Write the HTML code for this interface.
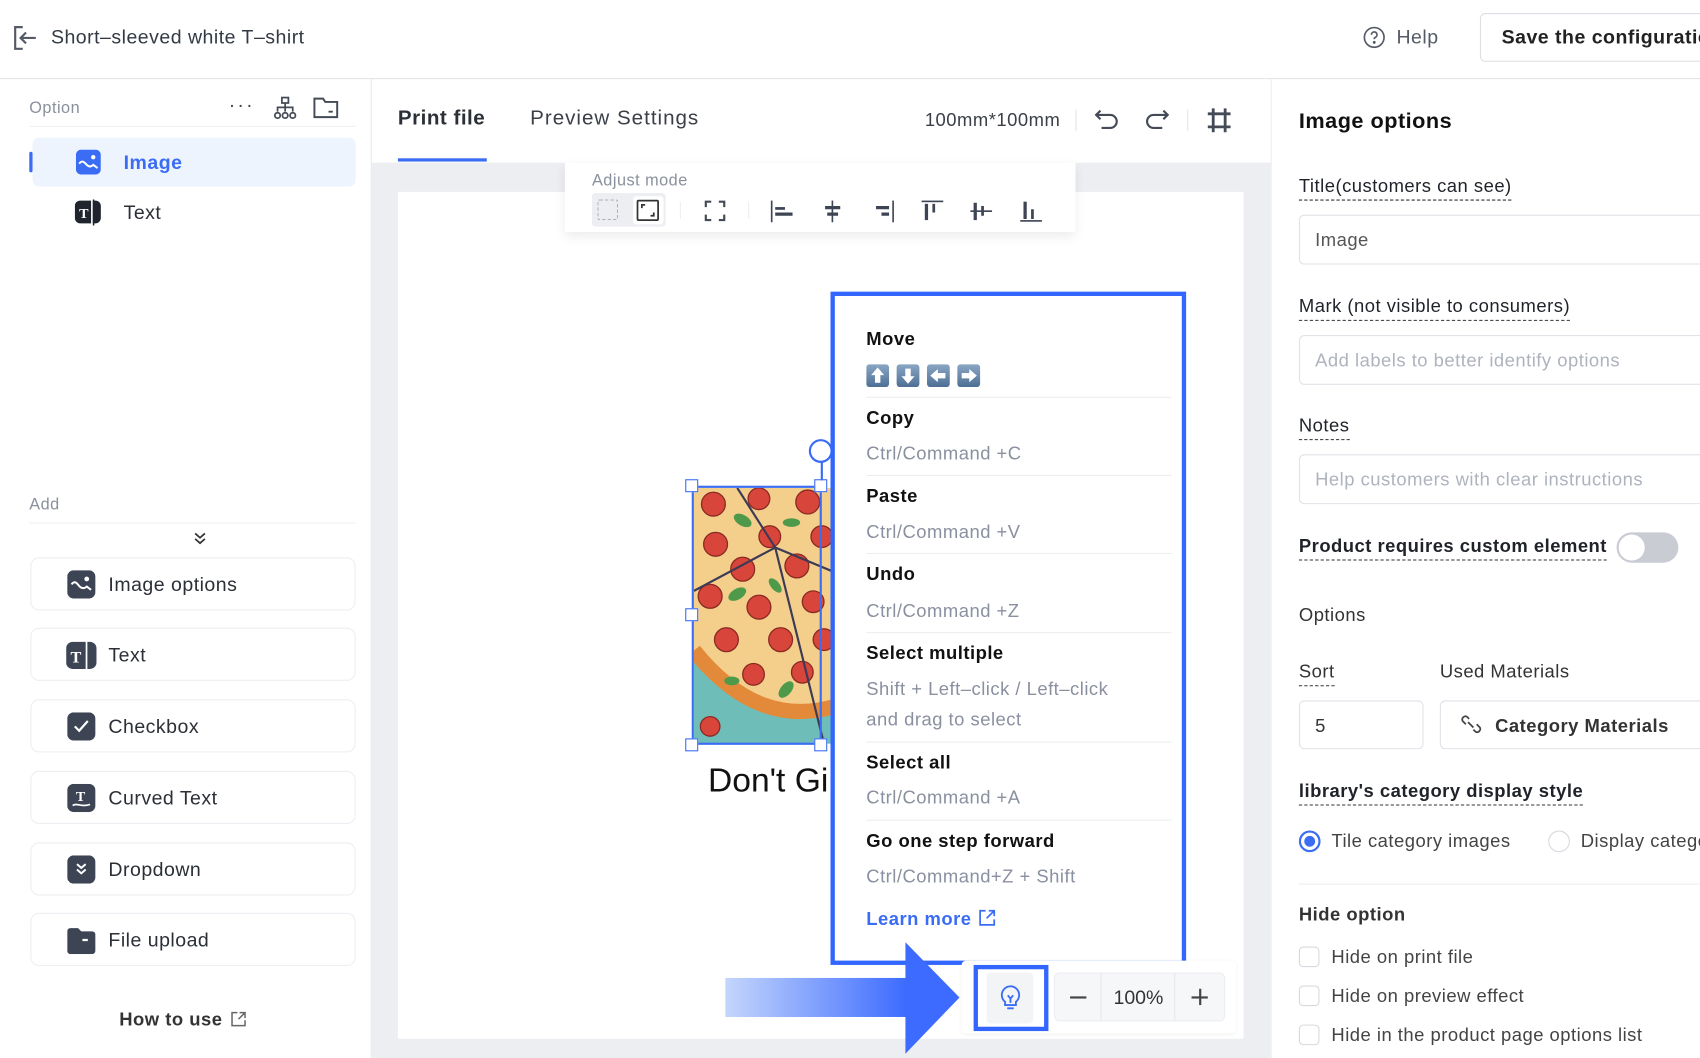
<!DOCTYPE html>
<html><head><meta charset="utf-8"><style>
*{box-sizing:border-box;margin:0;padding:0}
html,body{width:1700px;height:1058px;overflow:hidden;background:#fff;font-family:"Liberation Sans",sans-serif}
#w{position:absolute;left:0;top:0;width:1568px;height:976px;transform:scale(1.0842);transform-origin:0 0;overflow:hidden;background:#fff;letter-spacing:0.45px}
.a{position:absolute}
.t{position:absolute;line-height:20px;white-space:nowrap;color:#1f2329}
.dash{border-bottom:1px dashed #333;padding-bottom:2px}
.card{position:absolute;left:28px;width:300px;height:49px;border:1px solid #eceef1;border-radius:8px;background:#fff}
.card .l{position:absolute;left:71px;top:14px;font-size:18px;color:#2b2f36;line-height:20px}
.inp{position:absolute;left:1198px;width:400px;height:46px;border:1px solid #dfe2e7;border-radius:5px;font-size:17px;color:#aeb3bd;padding:13px 14px;line-height:20px;white-space:nowrap}
.mi{position:absolute;left:799px;font-size:17px;line-height:20px;white-space:nowrap}
.mh{color:#111;font-weight:600}
.ms{color:#8a90a0}
.sep{position:absolute;left:799px;width:282px;height:1px;background:#eceef1}
.cb{position:absolute;left:1198px;width:19px;height:19px;border:1.5px solid #d6d9df;border-radius:4px}
</style></head><body><div id="w">

<!-- header -->
<svg class="a" style="left:12px;top:23px" width="24" height="24" viewBox="0 0 24 24" fill="none" stroke="#555b66" stroke-width="2"><path d="M9 2H2v20h7"/><path d="M21 12H8M12 7l-5 5 5 5"/></svg>
<div class="t" style="left:47px;top:24px;font-size:18px;color:#333a44">Short–sleeved white T–shirt</div>
<svg class="a" style="left:1257px;top:24px" width="21" height="21" viewBox="0 0 22 22" fill="none" stroke="#555b66" stroke-width="1.6"><circle cx="11" cy="11" r="9.5"/><path d="M8.3 8.5a2.7 2.7 0 1 1 3.8 2.4c-.8.4-1.1.9-1.1 1.8"/><circle cx="11" cy="15.8" r=".6" fill="#555b66"/></svg>
<div class="t" style="left:1288px;top:24px;font-size:18px;color:#555b66">Help</div>
<div class="a" style="left:1365px;top:12px;width:260px;height:45px;border:1px solid #dcdfe4;border-radius:5px"></div>
<div class="t" style="left:1385px;top:24px;font-size:18px;font-weight:600;color:#222">Save the configuration</div>
<div class="a" style="left:0;top:72px;width:1568px;height:1px;background:#e3e5e9"></div>

<!-- left sidebar -->
<div class="t" style="left:27px;top:90px;font-size:15px;color:#8a909c">Option</div>
<div class="t" style="left:211px;top:87px;font-size:18px;color:#444;letter-spacing:2px">···</div>
<svg class="a" style="left:251px;top:88px" width="24" height="24" viewBox="0 0 24 24" fill="none" stroke="#444b57" stroke-width="1.6"><rect x="9" y="2" width="6" height="5"/><path d="M12 7v4M5 15v-4h14v4M12 11v4"/><circle cx="5" cy="18.5" r="2.5"/><circle cx="12" cy="18.5" r="2.5"/><circle cx="19" cy="18.5" r="2.5"/></svg>
<svg class="a" style="left:288px;top:88px" width="25" height="22" viewBox="0 0 25 22" fill="none" stroke="#444b57" stroke-width="1.8"><path d="M2 3h8l2 3h11v14H2z"/><path d="M15 15h4"/></svg>
<div class="a" style="left:27px;top:116px;width:301px;height:1px;background:#eef0f3"></div>
<div class="a" style="left:30px;top:127px;width:298px;height:45px;background:#eef4fe;border-radius:6px"></div>
<div class="a" style="left:27px;top:140px;width:3px;height:19px;background:#3a6cf4;border-radius:2px"></div>
<svg class="a" style="left:70px;top:138px" width="23" height="23" viewBox="0 0 23 23"><rect width="23" height="23" rx="5" fill="#3a6cf4"/><path d="M3 13c3-4 5-1 7 1s4 2 6 0l4 3" stroke="#fff" stroke-width="1.8" fill="none"/><circle cx="16" cy="7" r="2" fill="#fff"/></svg>
<div class="t" style="left:114px;top:140px;font-size:18px;color:#3a6cf4;font-weight:600">Image</div>
<svg class="a" style="left:69px;top:184px" width="25" height="24" viewBox="0 0 25 24"><rect x="0" y="1" width="24" height="21" rx="5" fill="#20242c"/><rect x="15" y="0" width="1.6" height="24" fill="#fff"/><rect x="16.6" y="0" width="1.4" height="24" fill="#20242c"/><text x="4" y="17" font-size="13" font-weight="bold" fill="#fff" font-family="Liberation Serif">T</text></svg>
<div class="t" style="left:114px;top:186px;font-size:18px;color:#2b2f36">Text</div>

<div class="t" style="left:27px;top:456px;font-size:15px;color:#8a909c">Add</div>
<div class="a" style="left:27px;top:482px;width:301px;height:1px;background:#eef0f3"></div>
<svg class="a" style="left:178px;top:490px" width="13" height="14" viewBox="0 0 13 14" fill="none" stroke="#333" stroke-width="1.6"><path d="M2 2l4.5 4 4.5-4M2 7l4.5 4 4.5-4"/></svg>

<div class="card" style="top:514px"><svg class="a" style="left:33px;top:11px" width="26" height="26" viewBox="0 0 26 26"><rect width="26" height="26" rx="6" fill="#3d4454"/><path d="M4 13c3-4 5-1 7 1.5s5 2.5 7 0.5l4 3" stroke="#fff" stroke-width="1.8" fill="none"/><circle cx="18" cy="8" r="2.2" fill="#fff"/></svg><div class="l">Image options</div></div>
<div class="card" style="top:579px"><svg class="a" style="left:32px;top:10px" width="28" height="29" viewBox="0 0 28 29"><rect x="0" y="2" width="28" height="25" rx="6" fill="#3d4454"/><rect x="18" y="0" width="1.6" height="29" fill="#fff"/><text x="4" y="21" font-size="15" font-weight="bold" fill="#fff" font-family="Liberation Serif">T</text></svg><div class="l">Text</div></div>
<div class="card" style="top:645px"><svg class="a" style="left:33px;top:11px" width="26" height="26" viewBox="0 0 26 26"><rect width="26" height="26" rx="6" fill="#3d4454"/><path d="M7 13l4 4 8-9" stroke="#fff" stroke-width="2" fill="none"/></svg><div class="l">Checkbox</div></div>
<div class="card" style="top:711px"><svg class="a" style="left:33px;top:11px" width="26" height="26" viewBox="0 0 26 26"><rect width="26" height="26" rx="6" fill="#3d4454"/><text x="8" y="16" font-size="13" font-weight="bold" fill="#fff" font-family="Liberation Serif">T</text><path d="M5 20c4-3 8 2 16-1" stroke="#fff" stroke-width="1.6" fill="none"/></svg><div class="l">Curved Text</div></div>
<div class="card" style="top:777px"><svg class="a" style="left:33px;top:11px" width="26" height="26" viewBox="0 0 26 26"><rect width="26" height="26" rx="6" fill="#3d4454"/><path d="M9 8l4 3.5 4-3.5M9 13l4 3.5 4-3.5" stroke="#fff" stroke-width="1.8" fill="none"/></svg><div class="l">Dropdown</div></div>
<div class="card" style="top:842px"><svg class="a" style="left:33px;top:11px" width="26" height="26" viewBox="0 0 26 26"><path d="M0 5a3 3 0 0 1 3-3h7l3 3h10a3 3 0 0 1 3 3v15a3 3 0 0 1-3 3H3a3 3 0 0 1-3-3z" fill="#3d4454"/><path d="M14 13h5" stroke="#fff" stroke-width="2"/></svg><div class="l">File upload</div></div>
<div class="t" style="left:110px;top:931px;font-size:17px;color:#333;font-weight:600">How to use</div>
<svg class="a" style="left:212px;top:932px" width="16" height="16" viewBox="0 0 16 16" fill="none" stroke="#666" stroke-width="1.4"><path d="M7 2H2v12h12V9M9 2h5v5M14 2L8 8"/></svg>

<!-- center -->
<div class="a" style="left:342px;top:73px;width:1px;height:903px;background:#e7e9ed"></div>
<div class="t" style="left:367px;top:100px;font-size:19px;color:#2b2f36;font-weight:600">Print file</div>
<div class="a" style="left:367px;top:146px;width:82px;height:3px;background:#3a6cf4"></div>
<div class="t" style="left:489px;top:100px;font-size:19px;color:#3a3f48;letter-spacing:0.9px">Preview Settings</div>
<div class="t" style="left:853px;top:101px;font-size:17px;color:#3a3f48">100mm*100mm</div>
<div class="a" style="left:992px;top:101px;width:1px;height:20px;background:#e3e5e9"></div>
<svg class="a" style="left:1008px;top:99px" width="26" height="24" viewBox="0 0 26 24" fill="none" stroke="#444b57" stroke-width="2"><path d="M7 3L3 7l4 4"/><path d="M3 7h13a6 6 0 0 1 0 12H8"/></svg>
<svg class="a" style="left:1054px;top:99px" width="26" height="24" viewBox="0 0 26 24" fill="none" stroke="#444b57" stroke-width="2"><path d="M19 3l4 4-4 4"/><path d="M23 7H10a6 6 0 0 0 0 12h8"/></svg>
<div class="a" style="left:1095px;top:101px;width:1px;height:20px;background:#e3e5e9"></div>
<svg class="a" style="left:1113px;top:99px" width="23" height="24" viewBox="0 0 23 24" fill="none" stroke="#444b57" stroke-width="2.6"><path d="M6 1v22M17 1v22M1 6h21M1 18h21"/></svg>

<div class="a" style="left:343px;top:150px;width:829px;height:826px;background:#eceef2"></div>
<div class="a" style="left:367px;top:177px;width:780px;height:781px;background:#fff"></div>

<!-- adjust popup -->
<div class="a" style="left:521px;top:150px;width:471px;height:64px;background:#fff;box-shadow:0 4px 10px rgba(0,0,0,.08)"></div>
<div class="t" style="left:546px;top:157px;font-size:15px;color:#8a909c">Adjust mode</div>
<div class="a" style="left:546px;top:178px;width:68px;height:31px;background:#eceef2;border-radius:3px"></div>
<div class="a" style="left:551px;top:184px;width:19px;height:19px;border:1.5px dashed #aab0ba;border-radius:2px"></div>
<div class="a" style="left:584px;top:181px;width:28px;height:26px;background:#fff;border-radius:3px"></div>
<svg class="a" style="left:587px;top:184px" width="21" height="20" viewBox="0 0 21 20" fill="none" stroke="#333" stroke-width="1.6"><rect x="1" y="1" width="19" height="18" rx="1"/><path d="M5 8V5h3M16 12v3h-3"/></svg>
<svg class="a" style="left:649px;top:184px" width="21" height="21" viewBox="0 0 21 21" fill="none" stroke="#444b57" stroke-width="2"><path d="M2 7V2h5M14 2h5v5M19 14v5h-5M7 19H2v-5"/></svg>
<div class="a" style="left:627px;top:186px;width:1px;height:16px;background:#eceef1"></div>
<div class="a" style="left:690px;top:186px;width:1px;height:16px;background:#eceef1"></div>
<svg class="a" style="left:710px;top:183px" width="255" height="24" viewBox="0 0 255 24" fill="#3d4454"><rect x="1" y="2" width="1.5" height="20"/><rect x="5" y="8" width="9" height="2.5"/><rect x="5" y="13" width="16" height="3"/>
<rect x="57" y="2" width="1.5" height="20"/><rect x="51" y="7" width="14" height="3"/><rect x="53" y="13" width="10" height="3"/>
<rect x="113" y="2" width="1.5" height="20"/><rect x="98" y="7" width="12" height="3"/><rect x="103" y="13" width="7" height="3"/>
<rect x="140" y="2" width="20" height="1.5"/><rect x="143" y="5" width="3" height="15"/><rect x="150" y="5" width="2.5" height="8"/>
<rect x="185" y="11" width="20" height="1.5"/><rect x="188" y="4" width="3" height="16"/><rect x="195" y="7" width="2.5" height="9"/>
<rect x="231" y="20" width="20" height="1.5"/><rect x="234" y="3" width="3" height="16"/><rect x="241" y="10" width="2.5" height="9"/></svg>

<!-- pizza -->
<svg class="a" style="left:640px;top:450px" width="135" height="236" viewBox="0 0 135 236">
<rect width="135" height="236" fill="#f4cf8c"/>
<path d="M0 150 Q60 225 135 200 L135 236 L0 236z" fill="#6fbdb8"/>
<path d="M0 150 Q60 225 135 200" stroke="#e38a3a" stroke-width="14" fill="none"/>
<g fill="#d8453a" stroke="#8a2a22" stroke-width="1.2">
<circle cx="18" cy="15" r="11"/><circle cx="60" cy="10" r="10"/><circle cx="105" cy="13" r="11"/><circle cx="20" cy="52" r="11"/><circle cx="70" cy="45" r="10"/><circle cx="118" cy="45" r="10"/><circle cx="45" cy="75" r="11"/><circle cx="95" cy="72" r="11"/><circle cx="15" cy="100" r="11"/><circle cx="60" cy="110" r="11"/><circle cx="110" cy="105" r="10"/><circle cx="30" cy="140" r="11"/><circle cx="80" cy="140" r="11"/><circle cx="120" cy="140" r="10"/><circle cx="55" cy="172" r="10"/><circle cx="100" cy="170" r="10"/><circle cx="15" cy="220" r="9"/></g>
<g fill="#4f9a4a"><ellipse cx="45" cy="30" rx="9" ry="5" transform="rotate(30 45 30)"/><ellipse cx="90" cy="32" rx="8" ry="4"/><ellipse cx="40" cy="98" rx="9" ry="5" transform="rotate(-30 40 98)"/><ellipse cx="75" cy="90" rx="8" ry="4" transform="rotate(50 75 90)"/><ellipse cx="85" cy="186" rx="9" ry="5" transform="rotate(-50 85 186)"/><ellipse cx="35" cy="178" rx="7" ry="4"/></g>
<path d="M40 0 L75 55 L135 80 M75 55 L0 95 M75 55 L120 236" stroke="#3d3a55" stroke-width="2" fill="none"/>
</svg>
<div class="a" style="left:638px;top:448px;width:120px;height:239px;border:2px solid #3a6cf4"></div>
<div class="a" style="left:632px;top:442px;width:12px;height:12px;border:1.5px solid #3a6cf4;background:#fff"></div>
<div class="a" style="left:751px;top:442px;width:12px;height:12px;border:1.5px solid #3a6cf4;background:#fff"></div>
<div class="a" style="left:632px;top:561px;width:12px;height:12px;border:1.5px solid #3a6cf4;background:#fff"></div>
<div class="a" style="left:632px;top:681px;width:12px;height:12px;border:1.5px solid #3a6cf4;background:#fff"></div>
<div class="a" style="left:751px;top:681px;width:12px;height:12px;border:1.5px solid #3a6cf4;background:#fff"></div>
<div class="a" style="left:757px;top:426px;width:1.5px;height:17px;background:#3a6cf4"></div>
<div class="a" style="left:746px;top:405px;width:22px;height:22px;border:2px solid #3a6cf4;border-radius:50%;background:#fff"></div>
<div class="t" style="left:653px;top:703px;font-size:31px;line-height:34px;color:#111;letter-spacing:0">Don't Gi</div>

<!-- menu -->
<div class="a" style="left:766px;top:269px;width:328px;height:621px;border:4px solid #3366ff;background:#fff"></div>
<div class="mi mh" style="top:303px">Move</div>
<svg class="a" style="left:799px;top:336px" width="106" height="21" viewBox="0 0 106 21">
<defs><linearGradient id="k" x1="0" y1="0" x2="0" y2="1"><stop offset="0" stop-color="#8aa6c4"/><stop offset="1" stop-color="#4d6f95"/></linearGradient></defs>
<rect x="0" y="0" width="21" height="21" rx="3" fill="url(#k)"/><rect x="28" y="0" width="21" height="21" rx="3" fill="url(#k)"/><rect x="56" y="0" width="21" height="21" rx="3" fill="url(#k)"/><rect x="84" y="0" width="21" height="21" rx="3" fill="url(#k)"/>
<g fill="#fff"><path d="M10.5 3l6 7h-3.5v7h-5v-7H4.5z"/><path d="M38.5 18l6-7h-3.5V4h-5v7h-3.5z"/><path d="M59 10.5l7-6v3.5h7v5h-7v3.5z"/><path d="M102 10.5l-7-6v3.5h-7v5h7v3.5z"/></g></svg>
<div class="sep" style="top:366px"></div>
<div class="mi mh" style="top:376px">Copy</div>
<div class="mi ms" style="top:409px">Ctrl/Command +C</div>
<div class="sep" style="top:438px"></div>
<div class="mi mh" style="top:448px">Paste</div>
<div class="mi ms" style="top:481px">Ctrl/Command +V</div>
<div class="sep" style="top:510px"></div>
<div class="mi mh" style="top:520px">Undo</div>
<div class="mi ms" style="top:554px">Ctrl/Command +Z</div>
<div class="sep" style="top:583px"></div>
<div class="mi mh" style="top:593px">Select multiple</div>
<div class="mi ms" style="top:626px">Shift + Left–click / Left–click</div>
<div class="mi ms" style="top:654px">and drag to select</div>
<div class="sep" style="top:684px"></div>
<div class="mi mh" style="top:694px">Select all</div>
<div class="mi ms" style="top:726px">Ctrl/Command +A</div>
<div class="sep" style="top:756px"></div>
<div class="mi mh" style="top:766px">Go one step forward</div>
<div class="mi ms" style="top:799px">Ctrl/Command+Z + Shift</div>
<div class="mi" style="top:838px;color:#3a6cf4;font-weight:600">Learn more</div>
<svg class="a" style="left:902px;top:838px" width="17" height="17" viewBox="0 0 17 17" fill="none" stroke="#3a6cf4" stroke-width="1.6"><path d="M7 2H2v13h13v-5M10 2h5v5M15 2L8 9"/></svg>

<!-- bottom controls -->
<div class="a" style="left:887px;top:886px;width:253px;height:67px;background:#fff;border-radius:4px;box-shadow:0 1px 4px rgba(0,0,0,.06)"></div>
<div class="a" style="left:898px;top:890px;width:69px;height:61px;border:4px solid #3366ff;background:#fff"></div>
<div class="a" style="left:910px;top:897px;width:43px;height:47px;background:#f3f4f6;border-radius:4px"></div>
<svg class="a" style="left:921px;top:907px" width="22" height="26" viewBox="0 0 22 26" fill="none" stroke="#3a6cf4" stroke-width="1.7"><path d="M6 17a8 8 0 1 1 10 0v3H6z"/><path d="M8 23h6M8.5 11l2.5 3 2.5-3M11 14v4"/></svg>
<div class="a" style="left:972px;top:897px;width:158px;height:45px;border:1px solid #eceef1;border-radius:5px;background:#f6f7f9"></div>
<div class="a" style="left:1015px;top:897px;width:1px;height:45px;background:#e6e8ec"></div>
<div class="a" style="left:1083px;top:897px;width:1px;height:45px;background:#e6e8ec"></div>
<div class="a" style="left:987px;top:919px;width:15px;height:2px;background:#444"></div>
<div class="t" style="left:1027px;top:910px;font-size:18px;color:#333;letter-spacing:0">100%</div>
<div class="a" style="left:1099px;top:919px;width:15px;height:2px;background:#444"></div>
<div class="a" style="left:1105.5px;top:912px;width:2px;height:15px;background:#444"></div>

<!-- arrow -->
<div class="a" style="left:669px;top:902px;width:167px;height:36px;background:linear-gradient(90deg,#c4d6fb,#3d6bff)"></div>
<svg class="a" style="left:835px;top:869px" width="52" height="103" viewBox="0 0 52 103"><path d="M0 0L50 51L0 103z" fill="#3d6bff"/></svg>

<!-- right panel -->
<div class="a" style="left:1172px;top:73px;width:1px;height:903px;background:#eceef1"></div>
<div class="t" style="left:1198px;top:102px;font-size:20px;font-weight:600;color:#111">Image options</div>
<div class="t dash" style="left:1198px;top:162px;font-size:17px;color:#1f2329">Title(customers can see)</div>
<div class="inp" style="top:198px;color:#555">Image</div>
<div class="t dash" style="left:1198px;top:273px;font-size:17px">Mark (not visible to consumers)</div>
<div class="inp" style="top:309px">Add labels to better identify options</div>
<div class="t dash" style="left:1198px;top:383px;font-size:17px">Notes</div>
<div class="inp" style="top:419px">Help customers with clear instructions</div>
<div class="t dash" style="left:1198px;top:494px;font-size:17px;font-weight:600">Product requires custom element</div>
<div class="a" style="left:1491px;top:491px;width:57px;height:28px;background:#c9ccd3;border-radius:14px"></div>
<div class="a" style="left:1493px;top:493px;width:24px;height:24px;background:#fff;border-radius:50%"></div>
<div class="t" style="left:1198px;top:558px;font-size:17px;color:#333">Options</div>
<div class="t dash" style="left:1198px;top:610px;font-size:17px;color:#333">Sort</div>
<div class="t" style="left:1328px;top:610px;font-size:17px;color:#333">Used Materials</div>
<div class="inp" style="top:646px;width:115px;color:#333;height:45px">5</div>
<div class="inp" style="left:1328px;top:646px;width:300px;height:45px;color:#333;font-weight:600;padding-left:50px">Category Materials</div>
<svg class="a" style="left:1346px;top:657px" width="22" height="22" viewBox="0 0 22 22" fill="none" stroke="#444" stroke-width="1.6"><path d="M9 6L7 4a3 3 0 0 0-4 4l3 3M13 16l2 2a3 3 0 0 0 4-4l-3-3M8 9l5 5"/></svg>
<div class="t dash" style="left:1198px;top:720px;font-size:17px;font-weight:600">library's category display style</div>
<div class="a" style="left:1198px;top:766px;width:20px;height:20px;border:2px solid #3a6cf4;border-radius:50%"></div>
<div class="a" style="left:1203px;top:771px;width:10px;height:10px;background:#3a6cf4;border-radius:50%"></div>
<div class="t" style="left:1228px;top:766px;font-size:17px;color:#444">Tile category images</div>
<div class="a" style="left:1428px;top:766px;width:20px;height:20px;border:1.5px solid #d6d9df;border-radius:50%"></div>
<div class="t" style="left:1458px;top:766px;font-size:17px;color:#444">Display category</div>
<div class="a" style="left:1198px;top:815px;width:370px;height:1px;background:#eceef1"></div>
<div class="t" style="left:1198px;top:834px;font-size:17px;color:#333;font-weight:600">Hide option</div>
<div class="cb" style="top:873px"></div><div class="t" style="left:1228px;top:873px;font-size:17px;color:#444">Hide on print file</div>
<div class="cb" style="top:909px"></div><div class="t" style="left:1228px;top:909px;font-size:17px;color:#444">Hide on preview effect</div>
<div class="cb" style="top:945px"></div><div class="t" style="left:1228px;top:945px;font-size:17px;color:#444">Hide in the product page options list</div>

</div></body></html>
